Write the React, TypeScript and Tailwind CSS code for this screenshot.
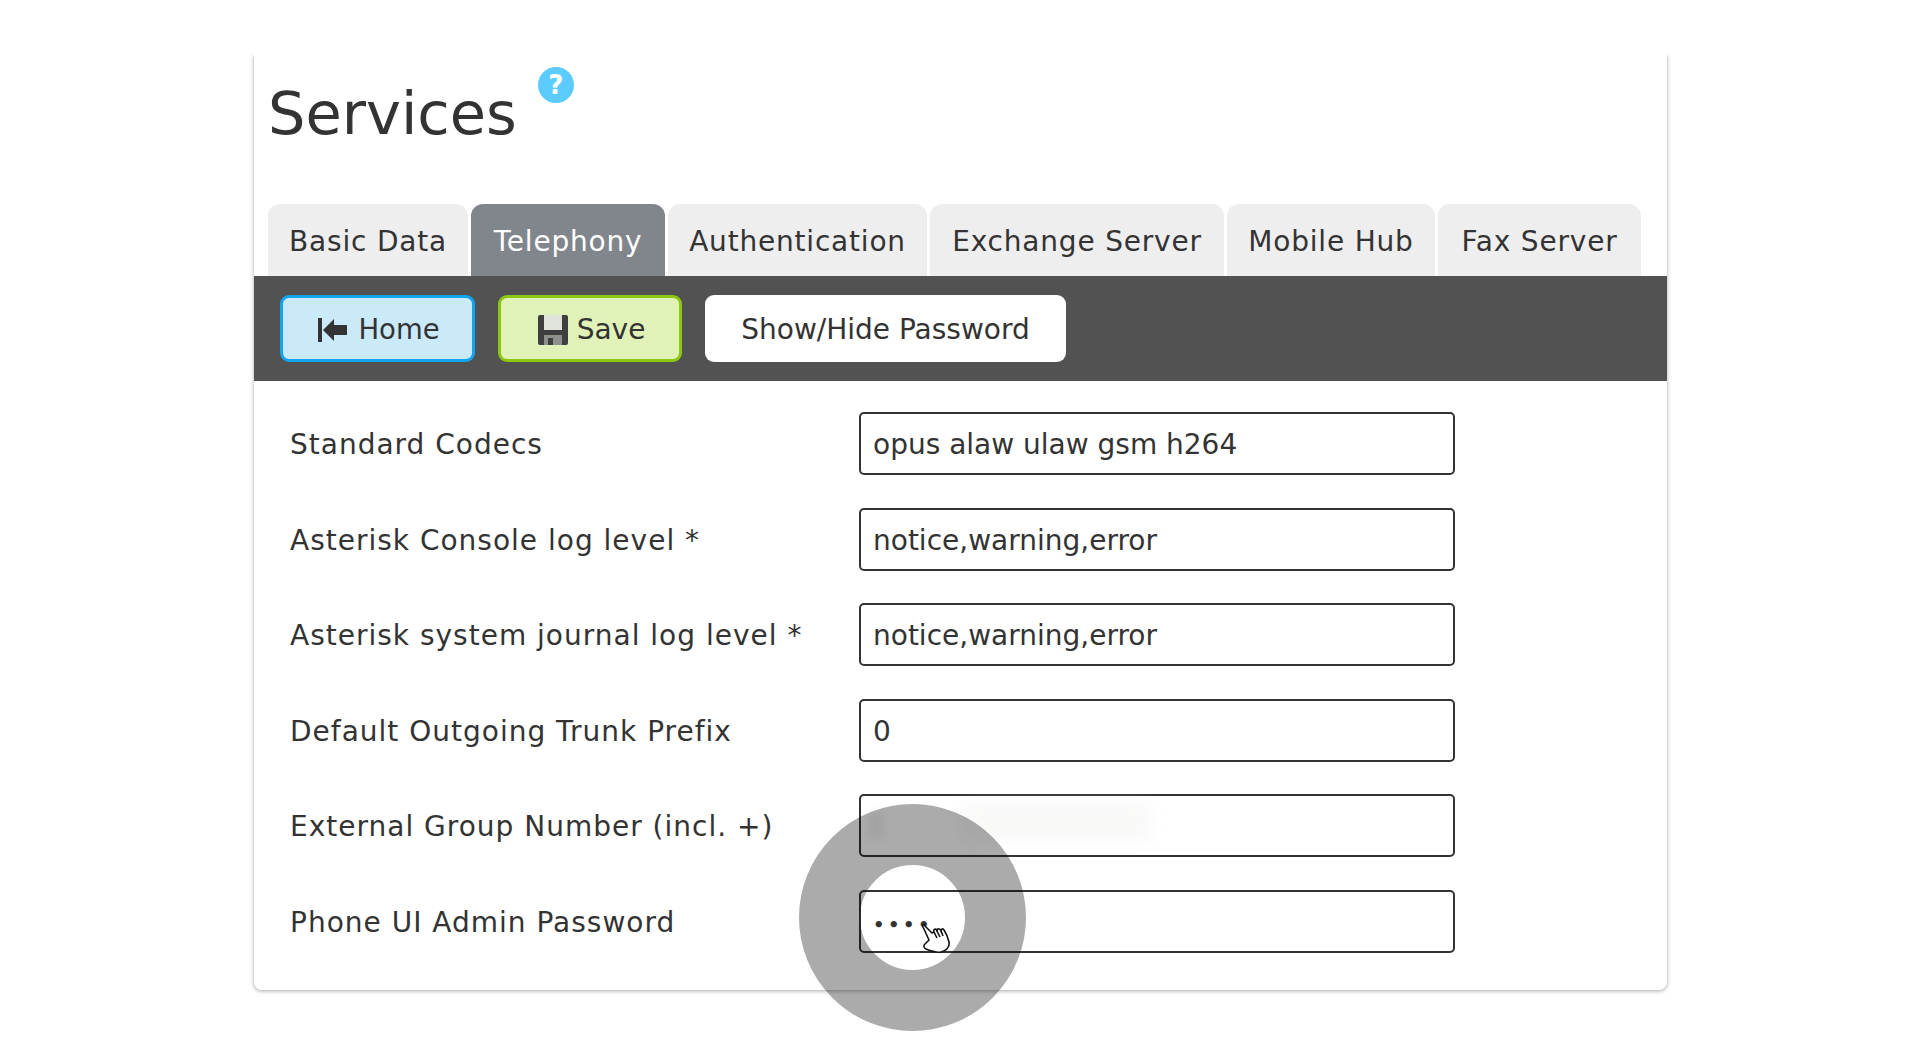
import React from 'react';

const font = { fontFamily: '"DejaVu Sans", sans-serif' };

const tabs = [
  { label: 'Basic Data', w: 'w-[200px]' },
  { label: 'Telephony', w: 'w-[194px]', active: true },
  { label: 'Authentication', w: 'w-[259px]' },
  { label: 'Exchange Server', w: 'w-[294px]' },
  { label: 'Mobile Hub', w: 'w-[208px]' },
  { label: 'Fax Server', w: 'w-[203px]' },
];

const rows = [
  { label: 'Standard Codecs', value: 'opus alaw ulaw gsm h264' },
  { label: 'Asterisk Console log level *', value: 'notice,warning,error' },
  { label: 'Asterisk system journal log level *', value: 'notice,warning,error' },
  { label: 'Default Outgoing Trunk Prefix', value: '0' },
  { label: 'External Group Number (incl. +)', value: '', blurred: true },
  { label: 'Phone UI Admin Password', value: '••••', password: true },
];

const HomeIcon = () => (
  <svg width="32" height="26" viewBox="0 0 32 26" fill="#333">
    <rect x="1" y="1" width="4" height="24" />
    <path d="M6 13 L17 2 V8 H30 V18 H17 V24 Z" />
  </svg>
);

const SaveIcon = () => (
  <svg width="30" height="30" viewBox="0 0 30 30">
    <rect x="0" y="0" width="30" height="30" rx="2" fill="#3f3f3f" />
    <rect x="6" y="0" width="18" height="15" fill="#dfe3dc" />
    <rect x="6" y="20" width="18" height="10" fill="#8d918c" />
    <rect x="10" y="23" width="5" height="7" fill="#3f3f3f" />
  </svg>
);

const Pointer = () => (
  <svg width="30" height="30" viewBox="0 0 30 30" fill="#fff" stroke="#111" strokeWidth="1.6" strokeLinejoin="round">
    <path d="M3 2 C2 0 0 1 1 3 L7 16 L3 20 C1 22 2 24 4 25 C9 27 14 29 19 28 C24 27 28 23 27 18 C26 14 24 9 22 6 C21 4 19 5 19 7 C18 4 15 4 15 7 C14 4 11 5 12 8 L10 9 L8 7 Z" />
    <path d="M12 8 L15 14 M15 7 L18 13 M19 7 L21 12" fill="none" />
  </svg>
);

export default function App() {
  return (
    <div className="w-[1920px] h-[1040px] bg-white overflow-hidden relative text-[#333]" style={font}>
      <div className="ml-[254px] mt-[55px] w-[1413px] h-[935px] bg-white rounded-b-[8px] shadow-[0_1px_4px_rgba(0,0,0,0.35)] [clip-path:inset(0_-10px_-10px_-10px)] flex flex-col">
        <div className="h-[149px] pl-[14px] flex items-start">
          <h1 className="text-[59px] leading-[70px] mt-[24px] text-[#333]">Services</h1>
          <div className="ml-[21px] mt-[12px] w-[36px] h-[36px] rounded-full bg-[#5ccbff] text-white flex items-center justify-center text-[26px] font-bold">?</div>
        </div>

        <div className="h-[72px] pl-[14px] flex gap-[3px]">
          {tabs.map((t) => (
            <div
              key={t.label}
              className={`${t.w} rounded-t-[12px] flex items-center justify-center pt-[3px] text-[28px] tracking-[0.8px] ${t.active ? 'bg-[#81868d] text-white' : 'bg-[#eeeeee] text-[#333]'}`}
            >
              {t.label}
            </div>
          ))}
        </div>

        <div className="h-[105px] bg-[#525252] pl-[26px] pt-[19px] flex gap-[23px] items-start">
          <button className="w-[195px] h-[67px] rounded-[9px] bg-[#caeaf9] border-[3px] border-[#12a5ee] flex items-center justify-center gap-[9px] pl-[2px] pt-[2px] text-[27.500px]">
            <HomeIcon />
            Home
          </button>
          <button className="w-[184px] h-[67px] rounded-[9px] bg-[#e1f2b8] border-[3px] border-[#8cc80f] flex items-center justify-center gap-[9px] pl-[3px] pt-[2px] text-[28px]">
            <SaveIcon />
            Save
          </button>
          <button className="w-[361px] h-[67px] rounded-[9px] bg-white flex items-center justify-center pt-[2px] text-[28px]">
            Show/Hide Password
          </button>
        </div>

        <div className="pt-[31px] pl-[36px] flex flex-col gap-[32.500px]">
          {rows.map((r) => (
            <div key={r.label} className="flex items-center h-[63px] text-[28px]">
              <div className="w-[569px] shrink-0 pt-[3px] tracking-[1px]">{r.label}</div>
              <div className="w-[596px] h-[63px] border-[2.500px] border-[#333] rounded-[5px] pl-[12px] pt-[3px] flex items-center relative bg-white">
                {r.password ? (
                  <span className="text-[18px] font-bold tracking-[3.500px] mt-[4px]">{r.value}</span>
                ) : (
                  r.value
                )}
                {r.blurred && (
                  <>
                    <div className="absolute left-[8px] top-[16px] w-[14px] h-[26px] bg-black/5 blur-[4px]" />
                    <div className="absolute left-[100px] top-[8px] w-[190px] h-[36px] bg-[#f2f0ee] opacity-40 blur-[8px]" />
                  </>
                )}
              </div>
            </div>
          ))}
        </div>
      </div>

      <div className="absolute left-[799px] top-[804px] w-[227px] h-[227px] rounded-full border-[61px] border-black/33" />
      <div className="absolute left-[922px] top-[924px]">
        <Pointer />
      </div>
    </div>
  );
}
